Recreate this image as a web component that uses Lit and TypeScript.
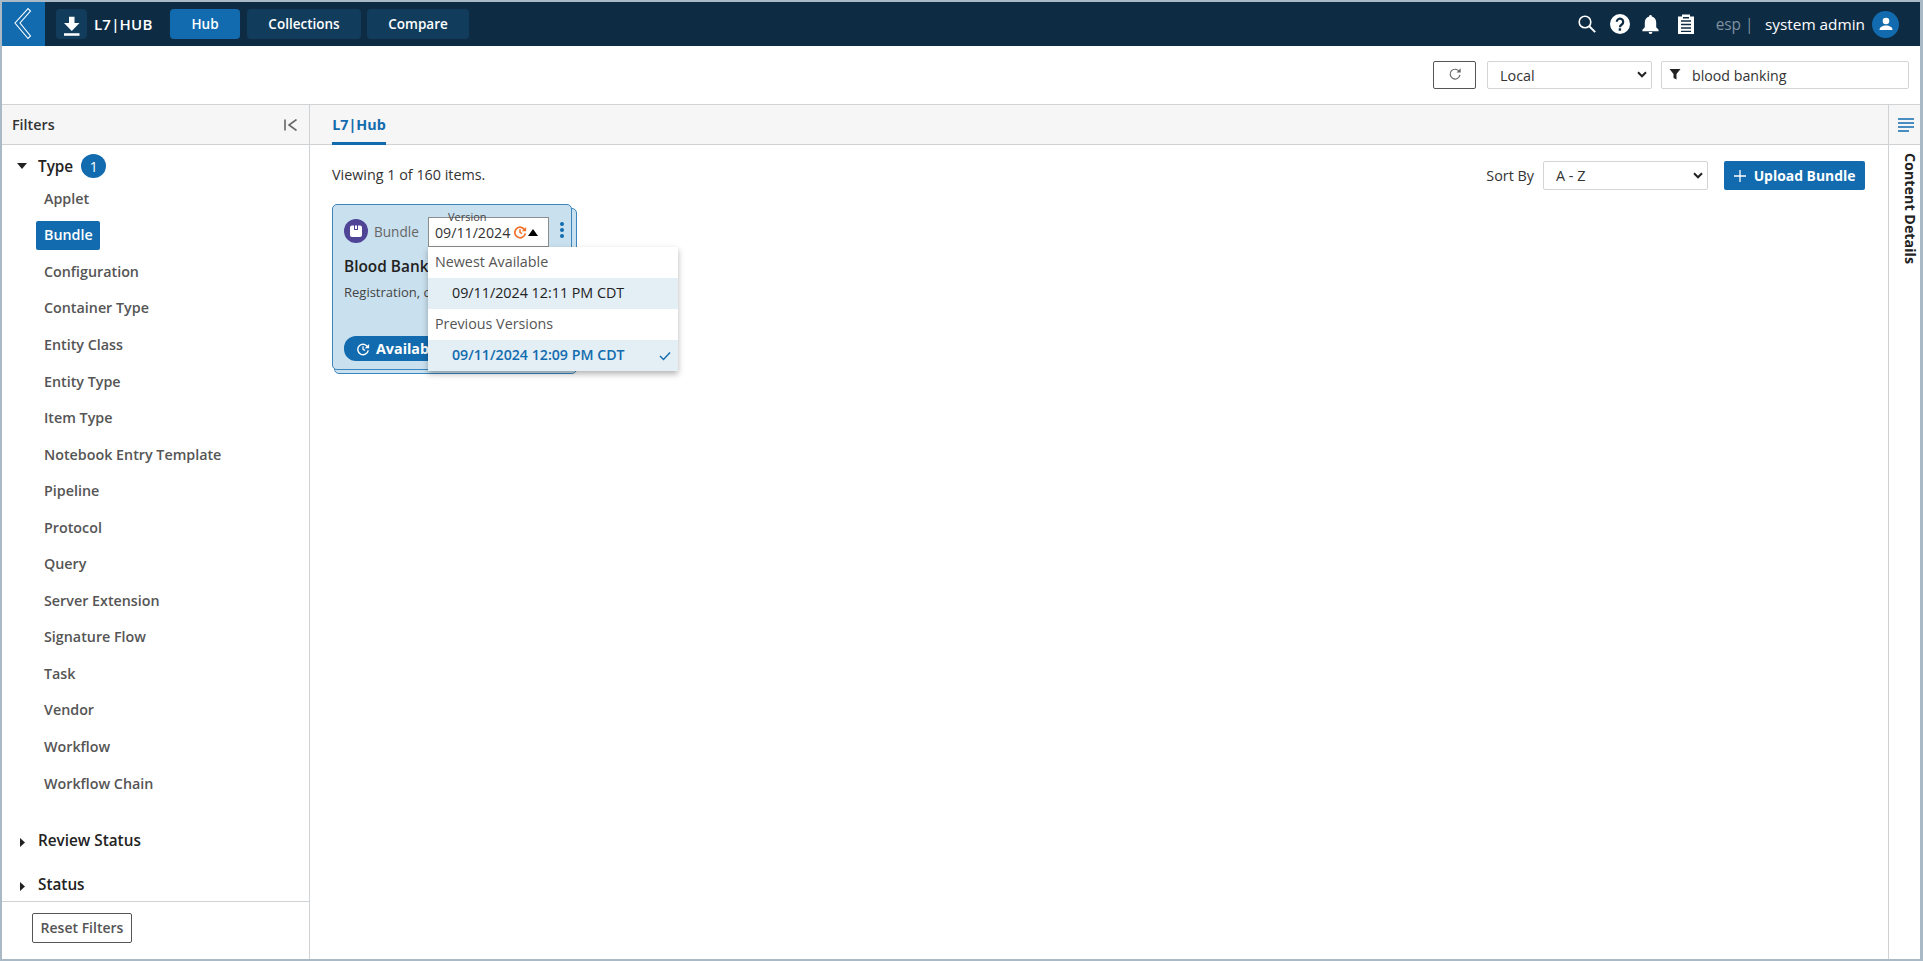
import { LitElement, html, css } from "lit";
import { customElement } from "lit/decorators.js";

const TYPES = ["Applet","Bundle","Configuration","Container Type","Entity Class","Entity Type","Item Type","Notebook Entry Template","Pipeline","Protocol","Query","Server Extension","Signature Flow","Task","Vendor","Workflow","Workflow Chain"];

const chevron = html`<svg class="chev" viewBox="0 0 10 7" width="10" height="7"><path d="M1 1.300l4 4 4-4" fill="none" stroke="#222" stroke-width="2"/></svg>`;
const historyIcon = (c: string, s: number, w = 1.6) => html`<svg viewBox="0 0 16 16" width="${s}" height="${s}"><path d="M13.600 6.200A6 6 0 1 0 14 9.500" fill="none" stroke="${c}" stroke-width="${w}"/><path d="M15 2.200v5h-5z" fill="${c}"/><path d="M8 4.800V8.400l2.400 1.400" fill="none" stroke="${c}" stroke-width="${w - 0.2}"/></svg>`;
const closedCaret = html`<span class="caret closed"><svg viewBox="0 0 5 9" width="5" height="9"><path d="M0 0l5 4.500-5 4.500z" fill="#222"/></svg></span>`;

@customElement("app-root")
export class AppRoot extends LitElement {
  static styles = css`
    :host { display: block; width: 1923px; height: 961px; box-sizing: border-box; border: 2px solid #a9bac6; border-right-width: 3px; font-family: "Open Sans", sans-serif; color: #333; background: #fff; overflow: hidden; }
    * { box-sizing: border-box; }
    .page { display: flex; flex-direction: column; height: 100%; }
    .nav { height: 44px; background: #0d2c44; display: flex; align-items: center; flex: none; color: #fff; }
    .logo { width: 43px; height: 44px; background: #126bae; display: flex; align-items: center; justify-content: center; padding-right: 2px; }
    .appicon { width: 31px; height: 30px; margin-left: 11px; background: #123c5c; border-radius: 4px; display: flex; align-items: center; justify-content: center; }
    .appname { font-size: 15px; font-weight: 600; margin-left: 7px; width: 76px; letter-spacing: .2px; }
    .navbtn { height: 30px; border-radius: 4px; background: #123c5c; color: #fff; font-size: 13.5px; font-weight: 600; display: flex; align-items: center; justify-content: center; }
    .navbtn.on { background: #126bae; }
    .hub { width: 70px; } .coll { width: 114px; margin-left: 7px; } .comp { width: 102px; margin-left: 6px; }
    .right { margin-left: auto; display: flex; align-items: center; height: 100%; }
    .i-help { margin-left: 14px; } .i-bell { margin-left: 11px; } .i-clip { margin-left: 18px; }
    .esp { font-size: 15.4px; color: #7f919f; margin-left: 22px; }
    .user { font-size: 15.35px; margin-left: 11.5px; }
    .avatar { width: 27px; height: 27px; border-radius: 50%; background: #126bae; margin: 0 21px 0 7px; display: flex; align-items: center; justify-content: center; }
    .ic { display: block; }
    .toolbar { height: 59px; flex: none; border-bottom: 1px solid #cfd3d6; display: flex; align-items: center; justify-content: flex-end; padding-right: 11px; }
    .refresh { width: 43px; height: 28px; border: 1px solid #555; border-radius: 2px; background: #fff; display: flex; align-items: center; justify-content: center; padding: 0 0 2px; margin-right: 11px; }
    .sel { position: relative; display: block; }
    .sel select { appearance: none; width: 100%; height: 100%; border: 1px solid #d2d5d8; border-radius: 2px; background: #fff; font: 14.4px "Open Sans", sans-serif; color: #333; padding: 0 0 0 12px; outline: none; }
    .chev { position: absolute; right: 5px; top: 50%; margin-top: -4px; pointer-events: none; }
    .src { width: 165px; height: 28px; margin-right: 9px; }
    .search { width: 248px; height: 28px; border: 1px solid #d2d5d8; border-radius: 2px; display: flex; align-items: center; padding-left: 7px; }
    .search svg { margin-top: -3px; }
    .search input { border: 0; outline: none; flex: 1; min-width: 0; font: 14.2px "Open Sans", sans-serif; color: #333; padding: 0 0 0 11px; }
    .body { flex: 1; display: flex; min-height: 0; }
    .side { width: 308px; flex: none; border-right: 1px solid #cfd3d6; display: flex; flex-direction: column; }
    .phead { height: 40px; flex: none; background: #f6f6f6; border-bottom: 1px solid #cfd3d6; display: flex; align-items: center; }
    .side .phead { justify-content: space-between; padding: 0 12px 0 10px; font-size: 14.3px; font-weight: 600; }
    .ptitle { margin-top: -1px; }
    .filters { flex: 1; min-height: 0; overflow: hidden; padding: 6px 0 0 15px; }
    .group { display: flex; align-items: center; font-size: 15.3px; font-weight: 600; color: #222; height: 30px; }
    .caret { width: 21px; flex: none; display: flex; }
    .caret.closed { padding: 4px 0 0 3px; }
    .badge { width: 25px; height: 24px; border-radius: 50%; background: #126bae; color: #fff; font-size: 14px; font-weight: 400; display: flex; align-items: center; justify-content: center; margin-left: 8px; }
    .items { list-style: none; margin: 0; padding: 0 0 0 19px; }
    .items li { height: 36.56px; display: flex; align-items: center; font-size: 14.3px; font-weight: 600; color: #555; }
    .items span { padding: 0 8px; height: 29px; line-height: 27px; border-radius: 2px; }
    .items .on span { background: #126bae; color: #fff; width: 64px; }
    .g2 { margin-top: 23px; } .g3 { margin-top: 14px; }
    .sfoot { height: 58px; flex: none; border-top: 1px solid #cfd3d6; padding: 11px 0 0 30px; }
    .reset { width: 100px; height: 30px; background: #fff; border: 1px solid #555; border-radius: 2px; font: 600 14px "Open Sans", sans-serif; color: #555; padding: 0 0 1px; }
    .main { flex: 1; min-width: 0; display: flex; flex-direction: column; }
    .main .phead { padding-left: 22px; align-items: stretch; }
    .tab { width: 54px; display: flex; align-items: center; justify-content: center; font-size: 14.3px; font-weight: 700; color: #126bae; border-bottom: 3px solid #126bae; margin-bottom: -1px; padding-top: 1px; }
    .content { flex: 1; padding: 16px 23px 0 22px; position: relative; }
    .ctrl { display: flex; align-items: center; height: 29px; font-size: 14.35px; }
    .ctrl > span { margin-top: -2px; }
    .ctrl > .sort { margin: 0 9px 0 auto; }
    .sortsel { width: 165px; height: 29px; margin-right: 16px; }
    .upload { width: 141px; height: 29px; background: #126bae; color: #fff; border: 0; border-radius: 2px; font: 700 13.9px "Open Sans", sans-serif; display: flex; align-items: center; justify-content: center; gap: 8px; padding: 0; }
    .cardwrap { position: relative; width: 245px; height: 170px; margin-top: 14px; }
    .back { position: absolute; left: 2px; top: 4px; width: 243px; height: 166px; background: #c9e0ee; border: 1px solid #3b87bd; border-radius: 5px; }
    .card { position: absolute; left: 0; top: 0; width: 240px; height: 166px; background: #c9e0ee; border: 1px solid #3b87bd; border-radius: 5px; padding: 11px 11px; }
    .ctop { display: flex; align-items: center; height: 30px; }
    .pic { width: 24px; height: 24px; border-radius: 50%; background: #4f4496; display: flex; align-items: center; justify-content: center; }
    .kind { font-size: 13.6px; color: #666; margin-left: 6px; }
    .title { font-size: 15.4px; font-weight: 600; color: #222; margin-top: 10px; white-space: nowrap; }
    .desc { font-size: 13px; color: #444; margin-top: 6px; white-space: nowrap; }
    .avail { position: absolute; left: 11px; bottom: 8px; width: 120px; height: 25px; background: #126bae; color: #fff; border-radius: 12px; font-size: 14.3px; font-weight: 700; display: flex; align-items: center; gap: 6px; padding-left: 12px; white-space: nowrap; overflow: hidden; }
    .ver { position: absolute; left: 96px; top: 13px; width: 121px; height: 30px; background: #fff; border: 1px solid #8c8c8c; display: flex; align-items: center; padding-left: 6px; font-size: 14.2px; color: #333; }
    .vicon { margin-left: 3px; display: flex; }
    .verlabel { position: absolute; left: 19px; top: -7px; font-size: 11px; color: #444; line-height: 12px; }
    .up { width: 0; height: 0; border: 5px solid transparent; border-top: 0; border-bottom: 7px solid #000; margin-left: 1px; }
    .dots { position: absolute; left: 228px; top: 18px; display: flex; flex-direction: column; gap: 2px; }
    .dots i { width: 4px; height: 4px; border-radius: 50%; background: #126bae; display: block; }
    .menu { position: absolute; left: 96px; top: 43px; width: 250px; background: #fff; box-shadow: 0 3px 6px rgba(0,0,0,.3); font-size: 14.3px; }
    .mh { height: 31px; display: flex; align-items: center; padding: 0 0 2px 7px; color: #555; }
    .mi { height: 31px; display: flex; align-items: center; padding: 0 0 2px 24px; background: #e3eef5; color: #222; position: relative; }
    .mi.sel2 { color: #126bae; font-weight: 600; font-size: 14.2px; }
    .check { position: absolute; right: 7px; top: 11px; }
    .rail { width: 32px; flex: none; border-left: 1px solid #cfd3d6; display: flex; flex-direction: column; }
    .rail .phead { justify-content: center; padding-left: 2px; }
    .vert { writing-mode: vertical-rl; font-size: 14.3px; font-weight: 700; color: #222; margin: 8px 0 0 2px; }
  `;

  render() {
    return html`<div class="page">
      <header class="nav">
        <div class="logo"><svg viewBox="0 0 18 32" width="18" height="32"><path d="M14 .6L1 15l13 15.500L16.500 28 6 15 16.500 3z" fill="none" stroke="#fff" stroke-width="1.100"/></svg></div>
        <div class="appicon"><svg viewBox="0 0 22 24" width="22" height="24"><path d="M8 4.700h5.500V11h5l-7.750 8L3 11h5z M3 21.300h15.500v2.400H3z" fill="#fff"/></svg></div>
        <div class="appname">L7|HUB</div>
        <div class="navbtn on hub">Hub</div><div class="navbtn coll">Collections</div><div class="navbtn comp">Compare</div>
        <div class="right">
          <svg class="ic" viewBox="0 0 18 18" width="18" height="18"><circle cx="7" cy="7" r="5.800" fill="none" stroke="#fff" stroke-width="1.600"/><path d="M11 11l6.200 6.200" stroke="#fff" stroke-width="1.900"/></svg>
          <svg class="ic i-help" viewBox="0 0 20 20" width="20" height="20"><circle cx="10" cy="10" r="10" fill="#fff"/><path d="M6.800 7.800a3.200 3.200 0 1 1 5 2.700c-1.300.9-1.900 1.300-1.900 2.800" fill="none" stroke="#0d2c44" stroke-width="2.200"/><rect x="8.700" y="14.300" width="2.400" height="2.400" fill="#0d2c44"/></svg>
          <svg class="ic i-bell" viewBox="0 0 20 22" width="19" height="21"><path d="M10 1a1.400 1.400 0 0 1 1.400 1.500C14 3.200 16 5.400 16 9v5l2.500 2.500V18h-17v-1.500L4 14V9c0-3.600 2-5.800 4.600-6.500A1.400 1.400 0 0 1 10 1z" fill="#fff"/><path d="M8 19h4a2 2 0 0 1-4 0z" fill="#fff"/></svg>
          <svg class="ic i-clip" viewBox="0 0 16 20" width="16" height="20"><path d="M0 2.500h4V.5h8v2h4V20H0z" fill="#fff"/><path d="M3 7h10M3 10.500h10M3 14h10M3 17.300h10" stroke="#0d2c44" stroke-width="1.300"/><rect x="5" y="3" width="6" height="1.500" fill="#0d2c44"/></svg>
          <span class="esp">esp |</span><span class="user">system admin</span>
          <div class="avatar"><svg viewBox="0 0 16 16" width="16" height="16"><circle cx="8" cy="5" r="3.300" fill="#fff"/><path d="M1.500 14c0-3 3-4.500 6.500-4.500s6.500 1.500 6.500 4.500z" fill="#fff"/></svg></div>
        </div>
      </header>
      <div class="toolbar">
        <button class="refresh" aria-label="Refresh"><svg viewBox="0 0 16 16" width="14" height="14"><path d="M13 5.500A5.600 5.600 0 1 0 13.600 9" fill="none" stroke="#666" stroke-width="1.300"/><path d="M14.500 1.500v4.700H9.800z" fill="#666"/></svg></button>
        <label class="sel src"><select><option>Local</option></select>${chevron}</label>
        <div class="search"><svg viewBox="0 0 12 12" width="12" height="12"><path d="M.5 1h11L7.500 6v5.500l-3-1.500V6z" fill="#222"/></svg><input value="blood banking" /></div>
      </div>
      <div class="body">
        <aside class="side">
          <div class="phead"><span class="ptitle">Filters</span><svg viewBox="0 0 13 12" width="13" height="12"><path d="M1 .5v11" stroke="#666" stroke-width="1.600"/><path d="M12.500 .5L5 6l7.500 5.500" fill="none" stroke="#666" stroke-width="1.600"/></svg></div>
          <div class="filters">
            <div class="group"><span class="caret"><svg viewBox="0 0 10 6" width="10" height="6"><path d="M0 0h10L5 6z" fill="#222"/></svg></span>Type<span class="badge">1</span></div>
            <ul class="items">${TYPES.map(t => html`<li class="${t === "Bundle" ? "on" : ""}"><span>${t}</span></li>`)}</ul>
            <div class="group g2">${closedCaret}Review Status</div>
            <div class="group g3">${closedCaret}Status</div>
          </div>
          <div class="sfoot"><button class="reset">Reset Filters</button></div>
        </aside>
        <main class="main">
          <div class="phead"><div class="tab">L7|Hub</div></div>
          <div class="content">
            <div class="ctrl"><span>Viewing 1 of 160 items.</span><span class="sort">Sort By</span>
              <label class="sel sortsel"><select><option>A - Z</option></select>${chevron}</label>
              <button class="upload"><svg viewBox="0 0 12 12" width="12" height="12"><path d="M6 0v12M0 6h12" stroke="#fff" stroke-width="1.300"/></svg>Upload Bundle</button>
            </div>
            <div class="cardwrap">
              <div class="back"></div>
              <div class="card">
                <div class="ctop"><div class="pic"><svg viewBox="0 0 12 12" width="12" height="12"><path d="M0 2.500A2 2 0 0 1 2 .5h8a2 2 0 0 1 2 2V10a2 2 0 0 1-2 2H2a2 2 0 0 1-2-2z" fill="#fff"/><path d="M4 0h1v4h2V0h1v5H4z" fill="#4f4496"/></svg></div><span class="kind">Bundle</span></div>
                <div class="title">Blood Bank</div>
                <div class="desc">Registration, c</div>
                <div class="avail">${historyIcon("#fff", 14)}<span>Available</span></div>
              </div>
              <div class="ver"><span class="verlabel">Version</span>09/11/2024<span class="vicon">${historyIcon("#f0722c", 14, 2)}</span><span class="up"></span></div>
              <div class="dots"><i></i><i></i><i></i></div>
              <div class="menu">
                <div class="mh">Newest Available</div>
                <div class="mi">09/11/2024 12:11 PM CDT</div>
                <div class="mh">Previous Versions</div>
                <div class="mi sel2">09/11/2024 12:09 PM CDT<svg class="check" viewBox="0 0 12 10" width="12" height="10"><path d="M1 5l3.500 3.500L11 1.500" fill="none" stroke="#126bae" stroke-width="1.400"/></svg></div>
              </div>
            </div>
          </div>
        </main>
        <aside class="rail">
          <div class="phead"><svg viewBox="0 0 16 14" width="16" height="14"><path d="M0 1h16M0 5h16M0 9h16M0 13h11" stroke="#126bae" stroke-width="1.600"/></svg></div>
          <div class="vert">Content Details</div>
        </aside>
      </div>
    </div>`;
  }
}
